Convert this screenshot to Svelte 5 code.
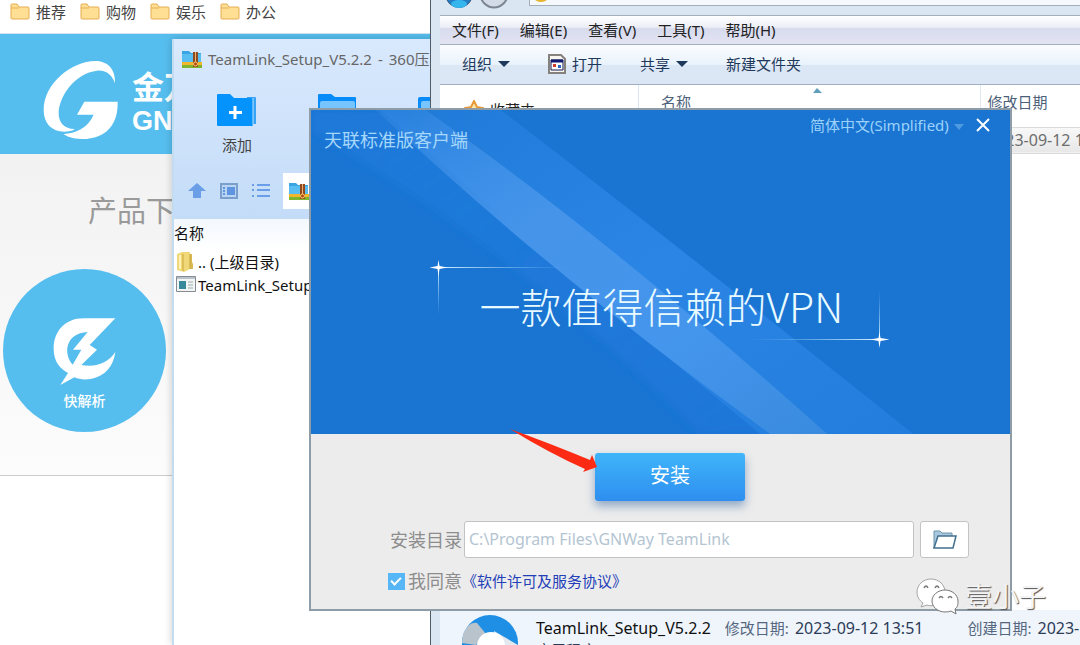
<script lang="ts">
	const bookmarks = ['推荐', '购物', '娱乐', '办公'];
	const menus = ['文件(F)', '编辑(E)', '查看(V)', '工具(T)', '帮助(H)'];

	let language = $state('zh');
	let installPath = $state('C:\\Program Files\\GNWay TeamLink');
	let agreed = $state(true);
</script>

{#snippet archiveIcon()}
	<svg width="20" height="18" viewBox="0 0 20 18" aria-hidden="true">
		<path d="M0 1h7l2 2h10v11H0z" fill="#3aa5e4" />
		<path d="M0 4h19v8H0z" fill="#58bdf0" />
		<path d="M0 12h20v3H0z" fill="#f0b72c" />
		<path d="M0 15h20v3H0z" fill="#7fb52e" />
		<path d="M11 2h5v15h-5z" fill="#8f4a20" />
		<path d="M13 2h1v10h-1z" fill="#f0b070" />
		<circle cx="13.500" cy="14" r="2" fill="#b3461d" stroke="#ffd060" />
	</svg>
{/snippet}

<div class="desktop">
	<div class="browser">
		<nav class="bookmarks">
			{#each bookmarks as name}
				<a href="#top">
					<svg width="20" height="17" viewBox="0 0 20 17" aria-hidden="true">
						<path d="M1 2q0-1 1-1h5l2 3h9q1 0 1 1v10q0 1-1 1H2q-1 0-1-1z" fill="#ffdf94" stroke="#e5ad51" />
						<path d="M1 5h8" stroke="#e5ad51" />
					</svg>
					{name}
				</a>
			{/each}
		</nav>
		<header class="site-header">
			<svg width="76" height="80" viewBox="128 180 228 240" fill="#fff" aria-hidden="true">
				<path d="M344 250C346 205 320 183 285 183 215 183 130 250 130 330c0 45 30 70 75 64q12-1 19-7c-30 1-49-17-49-47 0-50 50-122 115-128 30-2 46 15 54 38z" />
				<path d="M252 305h100c2 65-32 112-107 112-30-1-45-7-55-15 35-2 72-17 90-58h-50z" />
			</svg>
			<div class="brand">
				<strong class="brand-cn">金万维</strong>
				<strong class="brand-en">GNWAY</strong>
			</div>
		</header>
		<main class="downloads">
			<h1>产品下载</h1>
			<a class="product" href="#product">
				<svg width="63" height="68" viewBox="158 290 189 204" fill="#fff" aria-hidden="true">
					<path
						fill-rule="evenodd"
						d="M345 294l-77 80 22 14-47 46c47 8 82-8 102-39-6 43-30 71-70 80-20 4-36 3-53-4l-42 23 23-36c-23-13-43-33-43-73 0-50 32-91 90-91zm-83 41c-67 3-74 65-45 98l26-45h-25z"
					/>
				</svg>
				<span>快解析</span>
			</a>
		</main>
	</div>

	<section class="archive">
		<div class="archive-title">
			{@render archiveIcon()}
			<span>TeamLink_Setup_V5.2.2</span>
			<span>-</span>
			<span>360压缩</span>
		</div>
		<div class="archive-tools">
			<button>
				<svg width="40" height="33" viewBox="0 0 40 33" aria-hidden="true">
					<path d="M30 3h8q1 0 1 1v26H28z" fill="#3aa4f4" />
					<path d="M0 1q0-1 1-1h12l4 4h17q2 0 2 2v25q0 1-1 1H1q-1 0-1-1z" fill="#0492fd" />
					<path d="M36 4v27" stroke="#b9e2ff" />
					<path d="M18 12v13M12 18.500h13" stroke="#fff" stroke-width="3" />
				</svg>
				添加
			</button>
			<button aria-label="解压到">
				<svg width="38" height="33" viewBox="0 0 38 33" aria-hidden="true">
					<path d="M0 1q0-1 1-1h12l4 3h20q1 0 1 1v28H0z" fill="#078bf8" />
					<path d="M2 14V9q0-2 2-2h31q2 0 2 2v5" fill="#76c5ff" />
				</svg>
			</button>
			<button aria-label="一键解压">
				<svg width="38" height="33" viewBox="0 0 38 33" aria-hidden="true">
					<path d="M0 5q0-2 2-2h34q2 0 2 2v28H0z" fill="#078bf8" />
					<path d="M3 14V9q0-2 2-2h33v7" fill="#76c5ff" />
				</svg>
			</button>
		</div>
		<div class="archive-nav">
			<button aria-label="向上">
				<svg width="18" height="16" viewBox="0 0 18 16" aria-hidden="true">
					<path d="M9 0l9 8h-5v7H5V8H0z" fill="#6a9ee6" />
				</svg>
			</button>
			<button aria-label="缩略图">
				<svg width="18" height="16" viewBox="0 0 18 16" aria-hidden="true">
					<path d="M1 1h16v14H1z" fill="#b9d5f3" stroke="#7a9fcd" stroke-width="2" />
					<path d="M7 4h8v8H7zM3 4h2v2H3zM3 7h2v2H3zM3 10h2v2H3z" fill="#5f94e0" />
				</svg>
			</button>
			<button aria-label="列表">
				<svg width="18" height="16" viewBox="0 0 18 16" aria-hidden="true">
					<path d="M0 1h2v2H0zM5 1h13v2H5zM0 6h2v2H0zM5 6h13v2H5zM0 12h2v2H0zM5 12h13v2H5z" fill="#6b9ee9" />
				</svg>
			</button>
			<div class="archive-path">{@render archiveIcon()}</div>
		</div>
		<div class="archive-list">
			<div class="archive-head">名称</div>
			<div class="archive-row">
				<svg width="20" height="20" viewBox="0 0 20 20" aria-hidden="true">
					<path d="M8 2h8v8l1 2v5H8z" fill="#d9bb55" />
					<path d="M1 2l5-2h8v17l-6 3-7-2z" fill="#f0d878" />
					<path d="M7 2v17M14 2v15" stroke="#c9a63c" />
					<path d="M4 3v14" stroke="#fff3b8" stroke-width="2" />
				</svg>
				.. (上级目录)
			</div>
			<div class="archive-row">
				<svg width="20" height="17" viewBox="0 0 20 17" aria-hidden="true">
					<path d="M.5.5h19v15H.5z" fill="#f3f5f5" stroke="#858b90" />
					<path d="M1 2h18" stroke="#b9c3cc" stroke-width="2" />
					<path d="M3 5h7v8H3z" fill="#38899b" />
					<path d="M12 6h5M12 9h5M12 12h5" stroke="#9aa" />
				</svg>
				TeamLink_Setup_V5.2.2.exe
			</div>
		</div>
	</section>

	<section class="explorer">
		<div class="address">
			<svg width="64" height="9" viewBox="0 0 64 9" aria-hidden="true">
				<circle cx="14" cy="-6" r="13.500" fill="#237fc5" stroke="#3b5573" />
				<ellipse cx="14" cy="4" rx="8" ry="4" fill="#35b5ee" />
				<circle cx="49" cy="-6" r="13.500" fill="#d3dce6" stroke="#7b8592" stroke-width="2" />
			</svg>
			<div class="address-box">
				<svg width="16" height="3" viewBox="0 0 16 3" aria-hidden="true"><ellipse cx="6" cy="-1" rx="6" ry="3" fill="#e4b52e" /></svg>
			</div>
		</div>
		<div class="menubar">
			{#each menus as menu}
				<button>{menu}</button>
			{/each}
		</div>
		<div class="commands">
			<button>组织<i class="caret"></i></button>
			<button class="open">
				<svg width="18" height="20" viewBox="0 0 18 20" aria-hidden="true">
					<path d="M1 1h12l4 4v14H1z" fill="#f7f5ee" stroke="#85827d" stroke-width="2" />
					<path d="M3 6h12v10H3z" fill="#fff" stroke="#151b55" />
					<path d="M3 7h12" stroke="#101a70" stroke-width="3" />
					<path d="M5 10h3v3H5z" fill="#d23b2e" />
					<path d="M10 11h3v3h-3z" fill="#2f67c9" />
				</svg>
				打开
			</button>
			<button>共享<i class="caret"></i></button>
			<button>新建文件夹</button>
		</div>
		<div class="files">
			<aside>
				<svg width="20" height="20" viewBox="0 0 20 20" aria-hidden="true">
					<path d="M10 1l3 6 6 1-5 4 2 7-6-4-6 4 2-7-5-4 6-1z" fill="#fde9a8" stroke="#e79b3c" stroke-width="2" />
				</svg>
				收藏夹
			</aside>
			<table>
				<colgroup><col class="col-name" /><col /></colgroup>
				<thead>
					<tr>
						<th>
							<svg class="sort" width="9" height="5" viewBox="0 0 9 5" aria-hidden="true"><path d="M0 5l4-5 5 5z" fill="#5f9fbb" /></svg>
							名称
						</th>
						<th>修改日期</th>
					</tr>
				</thead>
				<tbody>
					<tr><td></td><td>2023-09-12 13:51</td></tr>
				</tbody>
			</table>
		</div>
		<footer class="details">
			<svg width="56" height="56" viewBox="0 0 56 56" aria-hidden="true">
				<circle cx="28" cy="28" r="28" fill="#1f8fe5" />
				<path d="M6 11Q10 7 15 8L24 19 14 30 0 28Q0 18 6 11z" fill="#b9c3cc" />
				<path d="M32 16l24 14v8L34 30z" fill="#e3e9ee" />
				<circle cx="29" cy="31" r="14" fill="#fff" />
			</svg>
			<div class="detail-text">
				<div class="detail-line">
					<span class="file-name">TeamLink_Setup_V5.2.2</span>
					<span class="key modified">修改日期:</span>
					<span class="date">2023-09-12 13:51</span>
					<span class="key created">创建日期:</span>
					<span class="date">2023-12-05</span>
				</div>
				<div class="detail-line">应用程序</div>
			</div>
		</footer>
	</section>

	<section class="installer">
		<div class="banner">
			<svg class="beams" viewBox="0 0 700 324" preserveAspectRatio="none" aria-hidden="true">
				<defs>
					<linearGradient id="wide" x1="0" y1="0" x2="1" y2="1">
						<stop offset="0" stop-color="#2b86e4" stop-opacity="0.3" />
						<stop offset="0.5" stop-color="#2a85e5" />
						<stop offset="1" stop-color="#237ddd" />
					</linearGradient>
					<linearGradient id="bright" x1="0" y1="0" x2="1" y2="1">
						<stop offset="0" stop-color="#4a98ec" stop-opacity="0.2" />
						<stop offset="0.35" stop-color="#4594ea" />
						<stop offset="0.7" stop-color="#4495ec" />
						<stop offset="1" stop-color="#398bdf" />
					</linearGradient>
					<linearGradient id="faint" x1="0" y1="0" x2="1" y2="1">
						<stop offset="0" stop-color="#2380e2" stop-opacity="0.4" />
						<stop offset="1" stop-color="#1d76d8" />
					</linearGradient>
					<filter id="soften"><feGaussianBlur stdDeviation="4" /></filter>
				</defs>
				<path d="M0 0h80Q260 160 500 324H390Q220 150 0 20z" fill="url(#faint)" filter="url(#soften)" />
				<path d="M70 0h120Q360 130 603 324H450Q250 160 70 0z" fill="url(#wide)" />
				<path d="M65 0h50Q300 130 517 324h-57Q240 165 65 0z" fill="url(#bright)" />
			</svg>
			<div class="banner-top">
				<h2>天联标准版客户端</h2>
				<div class="banner-actions">
					<label class="language">
						<select bind:value={language} aria-label="语言">
							<option value="zh">简体中文(Simplified)</option>
						</select>
						<svg width="10" height="6" viewBox="0 0 10 6" aria-hidden="true"><path d="M0 0h10L5 6z" fill="#4f9be0" /></svg>
					</label>
					<button class="close" aria-label="关闭">
						<svg width="14" height="14" viewBox="0 0 14 14" aria-hidden="true"><path d="M1 1l12 12M13 1L1 13" stroke="#fff" stroke-width="2" /></svg>
					</button>
				</div>
			</div>
			<div class="slogan">
				<svg class="frame" viewBox="0 0 460 92" aria-hidden="true">
					<defs>
						<linearGradient id="fadeRight"><stop stop-color="#d7f3ff" /><stop offset="1" stop-color="#7fc4f5" stop-opacity="0" /></linearGradient>
						<linearGradient id="fadeDown" x2="0" y2="1"><stop stop-color="#d7f3ff" /><stop offset="1" stop-color="#7fc4f5" stop-opacity="0" /></linearGradient>
						<linearGradient id="fadeLeft"><stop stop-color="#7fc4f5" stop-opacity="0" /><stop offset="1" stop-color="#d7f3ff" /></linearGradient>
						<linearGradient id="fadeUp" x2="0" y2="1"><stop stop-color="#7fc4f5" stop-opacity="0" /><stop offset="1" stop-color="#d7f3ff" /></linearGradient>
					</defs>
					<path d="M8 7h130v1H8z" fill="url(#fadeRight)" />
					<path d="M7 8h1v48H7z" fill="url(#fadeDown)" />
					<path d="M7.500 0l1 6 8 1.500-8 1.500-1 7-1-7-8-1.500 8-1.500z" fill="#fff" />
					<path d="M318 79h130v1H318z" fill="url(#fadeLeft)" />
					<path d="M448 30h1v50h-1z" fill="url(#fadeUp)" />
					<path d="M448.500 72l1 6 9 1.500-9 1.500-1 7-1-7-8-1.500 8-1.500z" fill="#fff" />
				</svg>
				<p>一款值得信赖的VPN</p>
			</div>
		</div>
		<form class="setup" onsubmit={(e) => e.preventDefault()}>
			<button class="install">安装</button>
			<div class="path-row">
				<label for="path">安装目录</label>
				<input id="path" type="text" bind:value={installPath} />
				<button class="browse" type="button" aria-label="浏览">
					<svg width="24" height="20" viewBox="0 0 24 20" aria-hidden="true">
						<path d="M1 18V1h6l2 2h10v4" fill="#a9c7dd" stroke="#6d93af" stroke-width="1" />
						<path d="M5 6h18l-3 12H1z" fill="#fff" stroke="#42708f" stroke-width="1.500" />
					</svg>
				</button>
			</div>
			<div class="agree-row">
				<input id="agree" type="checkbox" bind:checked={agreed} />
				<label for="agree">我同意</label>
				<a href="#license">《软件许可及服务协议》</a>
			</div>
		</form>
		<svg class="pointer" width="90" height="48" viewBox="0 0 90 48" aria-hidden="true">
			<path d="M1 1Q40 15 81 32l2-5 5 12-14 5 2-3Q40 25 1 1z" fill="#fd2a14" />
		</svg>
	</section>

	<div class="watermark">
		<svg width="44" height="38" viewBox="0 0 44 38" aria-hidden="true">
			<path d="M15 1C7 1 1 7 1 14c0 5 2 8 6 11l-2 4 6-2c3 1 5 1 8 0 6-2 10-6 10-13S23 1 15 1z" fill="#fff" stroke="#a5a5a5" />
			<path d="M29 12c-7 0-13 5-13 11s6 11 13 11q4 0 6-1l5 3-1-5c3-2 3-5 3-8 0-6-6-11-13-11z" fill="#fff" stroke="#777" />
			<path d="M8 10q2-4 4 0M19 10q2-4 4 0M23 20q2-3 4 0M32 20q2-3 4 0" fill="none" stroke="#777" stroke-width="1.500" />
		</svg>
		<span>壹小子</span>
	</div>
</div>

<style>
	:global(body) {
		overflow: hidden;
		background: #fff;
	}

	.desktop {
		position: relative;
		height: 100vh;
		overflow: hidden;
		font-family: "Noto Sans", "Noto Sans CJK SC", sans-serif;
		font-size: 15px;
		line-height: 20px;
		color: #222;
	}

	.desktop :is(button, input, select) {
		font: inherit;
		color: inherit;
		margin: 0;
		padding: 0;
		border: 0;
		background: none;
	}

	.desktop a {
		color: inherit;
		text-decoration: none;
	}

	svg {
		flex: none;
		display: block;
	}

	h1,
	h2,
	p {
		margin: 0;
		font-weight: 400;
	}

	/* browser page */
	.bookmarks {
		display: flex;
		gap: 14px;
		height: 23px;
		padding: 0 10px 10px;
		border-bottom: 1px solid #cfe4ee;
	}

	.bookmarks a {
		display: flex;
		align-items: center;
		gap: 6px;
		color: #444;
	}

	.site-header {
		display: flex;
		align-items: center;
		gap: 13px;
		height: 120px;
		padding-left: 43px;
		background: #56beee;
		color: #fff;
	}

	.site-header svg {
		margin-top: 12px;
	}

	.brand {
		display: flex;
		flex-direction: column;
		margin-top: 20px;
		white-space: nowrap;
	}

	.brand-cn {
		font-size: 32px;
		line-height: 34px;
	}

	.brand-en {
		font-family: "Liberation Sans", sans-serif;
		font-size: 27px;
		line-height: 34px;
	}

	.downloads {
		height: 321px;
		border-bottom: 1px solid #ccc;
		background: linear-gradient(#f2f2f2, #fcfcfc);
	}

	h1 {
		padding: 37px 0 38px 88px;
		font-size: 29px;
		line-height: 40px;
		color: #9a9a9a;
	}

	.product {
		display: flex;
		flex-direction: column;
		align-items: center;
		gap: 6px;
		box-sizing: border-box;
		width: 163px;
		height: 163px;
		margin-left: 3px;
		padding-top: 48px;
		border-radius: 50%;
		background: #56beee;
	}

	.product span {
		font-size: 14px;
		font-weight: 500;
		color: #fff;
	}

	/* archive window */
	.archive {
		position: absolute;
		top: 39px;
		bottom: 0;
		left: 172px;
		width: 480px;
		border-left: 2px solid #c2dcf2;
		background: linear-gradient(#d9e9fd, #c4dcf8 180px);
		box-shadow: 0 0 8px rgba(0, 0, 0, 0.2);
		box-sizing: border-box;
		white-space: nowrap;
		display: flex;
		flex-direction: column;
	}

	.archive-title {
		display: flex;
		align-items: center;
		gap: 6px;
		height: 40px;
		padding-left: 8px;
		color: #666;
	}

	.archive-tools {
		display: flex;
		height: 80px;
		padding: 15px 0 0 13px;
		box-sizing: border-box;
	}

	.archive-tools button {
		display: flex;
		flex-direction: column;
		align-items: center;
		gap: 8px;
		width: 100px;
		color: #444;
	}

	.archive-nav {
		display: flex;
		align-items: center;
		gap: 14px;
		height: 60px;
		padding: 4px 0 0 14px;
		box-sizing: border-box;
	}

	.archive-path {
		flex: 1;
		display: flex;
		align-items: center;
		height: 36px;
		margin-left: -1px;
		padding-left: 6px;
		background: #fff;
	}

	.archive-list {
		flex: 1;
		background: linear-gradient(#f3f8fe, #fff 30px);
		color: #111;
	}

	.archive-head {
		padding: 4px 0 7px;
	}

	.archive-row {
		display: flex;
		align-items: center;
		gap: 2px;
		height: 23px;
		padding-left: 2px;
	}

	/* explorer window */
	.explorer {
		position: absolute;
		top: 0;
		right: 0;
		bottom: 0;
		left: 430px;
		display: flex;
		flex-direction: column;
		padding-left: 9px;
		border-left: 1px solid #4f5b66;
		background: #dae7f3;
		overflow: hidden;
		white-space: nowrap;
	}

	.address {
		display: flex;
		gap: 20px;
		height: 15px;
		padding-left: 5px;
	}

	.address-box {
		flex: 1;
		height: 5px;
		padding-left: 5px;
		border: solid #a4aeb8;
		border-width: 0 0 1px 1px;
		background: #f6f9fc;
	}

	.menubar {
		display: flex;
		gap: 21px;
		height: 28px;
		padding-left: 12px;
		border: solid #a5aebd;
		border-width: 1px 0;
		background: linear-gradient(#fff, #eceef7 40%, #d7dbed 45%, #e3e4f3);
	}

	.commands {
		display: flex;
		align-items: center;
		gap: 38px;
		height: 38px;
		padding: 0 0 1px 22px;
		border-bottom: 1px solid #a0afc3;
		background: linear-gradient(#fbfdff, #e9f2fb 50%, #dce7f5 52%, #dbe6f4);
	}

	.commands button {
		display: flex;
		align-items: center;
		gap: 6px;
		color: #1e395b;
	}

	.caret {
		border: 6px solid transparent;
		border-top-color: #1e395b;
		border-bottom: 0;
	}

	.files {
		flex: 1;
		display: flex;
		background: #fff;
	}

	aside {
		display: flex;
		gap: 6px;
		width: 199px;
		padding: 15px 0 0 24px;
		box-sizing: border-box;
		border-right: 1px solid #d9e5f2;
	}

	table {
		flex: 1;
		align-self: flex-start;
		table-layout: fixed;
		border-collapse: collapse;
		width: 100%;
	}

	.col-name {
		width: 341px;
	}

	th {
		position: relative;
		height: 42px;
		padding: 0 0 8px 22px;
		box-sizing: border-box;
		font-weight: 400;
		text-align: left;
		color: #4c607a;
	}

	th + th {
		padding-left: 7px;
		border-left: 1px solid #e1eaf3;
	}

	.sort {
		position: absolute;
		top: 3px;
		left: 51%;
	}

	td {
		height: 25px;
		padding: 0 0 0 7px;
		border: solid #dadada;
		border-width: 1px 0;
		background: linear-gradient(#f8f8f8, #e7e7e7);
		font-size: 16px;
		color: #6d6d6d;
	}

	.details {
		display: flex;
		gap: 18px;
		height: 35px;
		padding: 5px 0 0 22px;
		box-sizing: border-box;
		background: linear-gradient(90deg, #eff5fc, #f0f4fb);
		color: #2c3c58;
	}

	.detail-text {
		padding-top: 2px;
	}

	.detail-line {
		display: flex;
		align-items: center;
		gap: 6px;
		height: 22px;
	}

	.file-name {
		font-size: 16px;
		color: #111;
	}

	.key {
		color: #55677f;
	}

	.date {
		font-size: 16px;
	}

	.modified {
		margin-left: 8px;
	}

	.created {
		margin-left: 38px;
	}

	/* installer */
	.installer {
		position: absolute;
		top: 108px;
		left: 309px;
		width: 703px;
		box-sizing: border-box;
		border: 2px solid #8e9ca8;
		background: #ececec;
	}

	.banner {
		position: relative;
		height: 324px;
		overflow: hidden;
		background: #1974d2;
	}

	.beams {
		position: absolute;
		inset: 0;
		width: 100%;
		height: 100%;
	}

	.banner-top {
		position: relative;
		display: flex;
		justify-content: space-between;
		padding: 5px 20px 0 13px;
	}

	h2 {
		padding-top: 15px;
		font-size: 18px;
		color: #a5d7fb;
	}

	.banner-actions {
		display: flex;
		gap: 12px;
		height: 20px;
		align-items: center;
	}

	.language {
		display: flex;
		align-items: center;
		gap: 5px;
		color: #9cd2fa;
	}

	.language svg {
		margin-top: 4px;
	}

	.desktop select {
		appearance: none;
	}

	.slogan {
		position: relative;
		width: 460px;
		margin: 110px auto 0;
		padding: 16px 0 0 49px;
		box-sizing: border-box;
	}

	.frame {
		position: absolute;
		top: 0;
		left: 0;
		width: 100%;
		overflow: visible;
	}

	.slogan p {
		position: relative;
		font-family: "Noto Sans CJK SC", sans-serif;
		font-size: 41px;
		line-height: 58px;
		font-weight: 300;
		color: #e9fbff;
		white-space: nowrap;
	}

	.setup {
		padding: 19px 41px 18px 77px;
		color: #8d8d8d;
	}

	.desktop .install {
		display: block;
		width: 150px;
		height: 48px;
		margin-left: 207px;
		padding-bottom: 3px;
		border-radius: 3px;
		background: linear-gradient(#3fb5fa, #2e8eef);
		box-shadow: 0 5px 10px rgba(50, 100, 160, 0.5);
		font-size: 20px;
		color: #fff;
	}

	.path-row {
		display: flex;
		align-items: center;
		margin-top: 20px;
		padding-left: 2px;
		font-size: 18px;
	}

	.desktop .path-row input {
		flex: 1;
		min-width: 0;
		height: 37px;
		margin: 0 6px 0 2px;
		padding: 0 4px 2px;
		box-sizing: border-box;
		border: 1px solid #c3c3c3;
		border-radius: 3px;
		background: #fff;
		font-size: 16px;
		color: #b4c5d2;
	}

	.desktop .browse {
		display: grid;
		place-items: center;
		width: 49px;
		height: 37px;
		box-sizing: border-box;
		border: 1px solid #c3c3c3;
		border-radius: 3px;
		background: #fff;
	}

	.agree-row {
		display: flex;
		align-items: center;
		height: 20px;
		margin-top: 13px;
		font-size: 18px;
	}

	.agree-row input {
		position: relative;
		appearance: none;
		width: 17px;
		height: 17px;
	}

	.desktop .agree-row input {
		margin-right: 3px;
		background: #57b6f5;
	}

	.agree-row input:checked::after {
		content: "";
		position: absolute;
		top: 2px;
		left: 5px;
		width: 4px;
		height: 8px;
		border: solid #fff;
		border-width: 0 2px 2px 0;
		transform: rotate(45deg);
	}

	.desktop .agree-row a {
		font-size: 15px;
		color: #2440b8;
	}

	.pointer {
		position: absolute;
		top: 318px;
		left: 198px;
	}

	.watermark {
		position: absolute;
		top: 577px;
		left: 916px;
		display: flex;
		align-items: center;
		gap: 5px;
		font-size: 27px;
		line-height: 40px;
		color: #f4f4f4;
		text-shadow: 1px 1px 1px #555;
	}
</style>
